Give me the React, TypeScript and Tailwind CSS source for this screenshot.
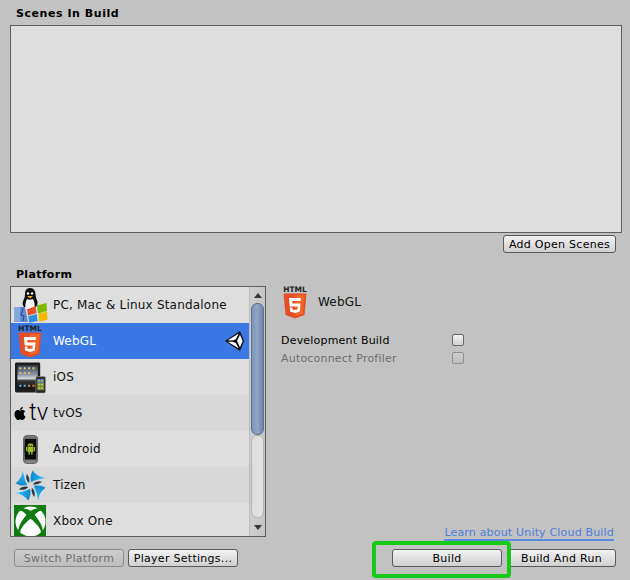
import React from 'react';
import { FaApple, FaXbox } from 'react-icons/fa6';

const Html5Icon = ({ className }: { className?: string }) => (
  <svg viewBox="0 0 24 33" className={className}>
    <text x="12" y="6" textAnchor="middle" fontSize="7.5" fontWeight="900" fontFamily="'DejaVu Sans', sans-serif" fill="#222">HTML</text>
    <path d="M0.500 7.500h23l-2 21.500-9.500 3.500L2.500 29z" fill="#e44d26" />
    <path d="M12 9h9.700l-1.800 18.800-7.900 2.700z" fill="#f16529" />
    <path d="M6 12h12l-.3 3H9.300l.2 2.600h8l-.7 8L12 27l-4.900-1.400-.3-4h2.600l.2 1.800 2.400.6 2.500-.6.3-3H6.700z" fill="#fff" />
  </svg>
);

const DesktopIcon = () => (
  <svg viewBox="0 0 36 36" className="w-[36px] h-[36px]">
    <path d="M2 20h11l3 15H3a1 1 0 0 1-1-1z" fill="#5f8bd3" />
    <path d="M2 20h6v15H3a1 1 0 0 1-1-1z" fill="#86a8de" />
    <path d="M11 21l-2 7 3 1-1 5" stroke="#26497f" fill="none" />
    <path d="M18 1c4 0 5.500 3 5.500 6.500 0 3 1.500 4.500 2 7.500.4 2-.5 4-1.500 5H12c-1-1-1.800-3-1-5.500.7-2.500 2-4 2-7C13 4 14 1 18 1z" fill="#0d0d0d" />
    <path d="M15 12c2 1 4 1 6 0 1.500 3 2 6 1.500 10H13.500c-.5-4 0-7 1.500-10z" fill="#f3f3f3" />
    <circle cx="16" cy="6.500" r="1.200" fill="#fff" />
    <circle cx="20" cy="6.500" r="1.200" fill="#fff" />
    <path d="M15 9h6l-3 2.500z" fill="#efb021" />
    <path d="M15 22.500l8.500-3.500 1 7-8.500 2.500z" fill="#e5532b" />
    <path d="M25 18.500l9.500-2.500.5 8-9 2.500z" fill="#7fb800" />
    <path d="M16.200 29.300l8.500-2.300 1 7-8.300 1.800z" fill="#2e90e2" />
    <path d="M26.300 26.700l8.800-2 .4 8-8.200 2z" fill="#f7b900" />
  </svg>
);

const TabletIcon = () => (
  <svg viewBox="0 0 32 33" className="w-[31px] h-[33px] ml-[1px]">
    <defs>
      <linearGradient id="ipad" x1="0" y1="0" x2="0" y2="1">
        <stop offset="0" stopColor="#3a4658" />
        <stop offset="0.4" stopColor="#8e9aa8" />
        <stop offset="0.55" stopColor="#d5d8dc" />
        <stop offset="0.65" stopColor="#333" />
        <stop offset="1" stopColor="#151515" />
      </linearGradient>
    </defs>
    <rect x="0" y="1" width="26" height="31" rx="1.500" fill="#1d1d1d" />
    <rect x="2.500" y="4" width="21" height="24.500" fill="url(#ipad)" />
    <path d="M4.500 6h2v2h-2zM9 6h2v2H9zM13.500 6h2v2h-2zM18 6h2v2h-2zM4.500 11h2v2h-2zM9 11h2v2H9zM13.500 11h2v2h-2z" fill="#e6c77a" />
    <path d="M4.500 24h2v2h-2zM9 24h2v2H9z" fill="#5fb0e8" />
    <path d="M13.500 24h2v2h-2zM18 24h2v2h-2z" fill="#e58a3c" />
    <rect x="21.500" y="15.500" width="10" height="17" rx="1.500" fill="#2a2a2a" stroke="#9a9a9a" strokeWidth="0.600" />
    <rect x="23" y="18" width="7" height="11.500" fill="#7a8f3d" />
    <path d="M23 18h7v4h-7z" fill="#4b78a8" />
    <path d="M24 19h1.500v1.500H24zM27 19h1.500v1.500H27zM24 23h1.500v1.500H24zM27 23h1.500v1.500H27zM24 26.500h1.500V28H24zM27 26.500h1.500V28H27z" fill="#e8d35a" />
  </svg>
);

const TvIcon = () => (
  <div className="w-[32px] flex items-center text-black">
    <FaApple className="w-[12px] h-[15px] shrink-0" />
    <span className="font-['Roboto',sans-serif] font-light text-[24px] leading-none ml-[3px] -mt-[3px]">tv</span>
  </div>
);

const PhoneIcon = () => (
  <svg viewBox="0 0 15 29" className="w-[15px] h-[29px]">
    <defs>
      <linearGradient id="phone" x1="0" y1="0" x2="0" y2="1">
        <stop offset="0" stopColor="#7b7b7b" />
        <stop offset="0.5" stopColor="#3a3a3a" />
        <stop offset="1" stopColor="#8c8c8c" />
      </linearGradient>
    </defs>
    <rect x="0.500" y="0.500" width="14" height="28" rx="3.500" fill="url(#phone)" stroke="#666" />
    <rect x="2" y="4" width="11" height="20.500" fill="#0c0c0c" />
    {/* android robot */}
    <path d="M4.500 11.500a3 3 0 0 1 6 0z" fill="#9ec02f" />
    <path d="M4.500 12h6v5h-1v2.500H8.200V17H6.800v2.500H5.500V17h-1z" fill="#9ec02f" />
    <path d="M3 12h1v4H3zM11 12h1v4h-1z" fill="#9ec02f" />
    <path d="M5.500 8l1 1.200M9.500 8l-1 1.200" stroke="#9ec02f" strokeWidth="0.500" />
    <path d="M6 10h.7v.7H6zM8.300 10H9v.7h-.7z" fill="#0c0c0c" />
  </svg>
);

const bladeAngles = [0, 90, 180, 270];

const TizenIcon = () => (
  <svg viewBox="0 0 36 36" className="w-[33px] h-[33px]">
    <defs>
      <linearGradient id="blade" x1="0" y1="0" x2="1" y2="0.300">
        <stop offset="0" stopColor="#0f7fc4" />
        <stop offset="1" stopColor="#27c1fb" />
      </linearGradient>
    </defs>
    {bladeAngles.map(a => (
      <g key={a} transform={`rotate(${a} 18 18)`}>
        <path d="M18.500 14.500C17.500 10 18 5.500 20.500 1.500 23 5.500 28 9 34.500 9.500 29 10.500 23 12 18.500 14.500z" fill="url(#blade)" />
        <path d="M16.500 15.500C13.500 13 12.500 9 14 5.500 16 8 17.500 11 16.500 15.500z" fill="#2a3a44" />
      </g>
    ))}
  </svg>
);

const UnityIcon = () => (
  <svg viewBox="0 0 19 20" className="w-[19px] h-[20px]">
    <path d="M0 10L15 0l4 10-4 10z" fill="#0a0a0a" />
    <path d="M2.800 9.300L13.800 2.600l-3 5.700-3.500 1.200z" fill="#fff" />
    <path d="M2.800 10.700l4.500.1 3.500 1.200 3 5.400z" fill="#fff" />
    <path d="M15 3.800l2.600 6.200-2.600 6.200-3-6.200z" fill="#fff" />
  </svg>
);

const ScrollBar = () => (
  <div className="w-[16px] h-full flex flex-col items-center bg-gradient-to-r from-[#cfcfcf] to-[#c4c4c4] border-l border-[#bdbdbd]">
    <div className="h-[16px] w-full flex items-center justify-center">
      <div className="w-0 h-0 border-x-[4px] border-x-transparent border-b-[5px] border-b-[#3a3a3a]" />
    </div>
    <div className="w-[13px] h-[132px] rounded-[6px] border border-[#5d7290] bg-gradient-to-r from-[#7f95b8] via-[#90a6c6] to-[#6f84a6]" />
    <div className="w-[13px] flex-1 rounded-[6px] border border-[#b3b3b3] bg-gradient-to-r from-[#dcdcdc] to-[#e4e4e4]" />
    <div className="h-[18px] w-full flex items-center justify-center">
      <div className="w-0 h-0 border-x-[4px] border-x-transparent border-t-[5px] border-t-[#3a3a3a]" />
    </div>
  </div>
);

const Btn = ({ label, className, disabled }: { label: string; className: string; disabled?: boolean }) => (
  <button
    className={`h-[18px] rounded-[3px] border flex items-center justify-center text-[11px] leading-none tracking-[0.28px] bg-gradient-to-b ${
      disabled ? 'border-[#8e8e8e] text-[#6f6f6f] from-[#cdcdcd] to-[#bcbcbc]' : 'border-[#5a5a5a] text-black from-[#f2f2f2] to-[#d0d0d0]'
    } ${className}`}
  >
    {label}
  </button>
);

const rows: { name: string; icon: React.ReactNode; bg: string; selected?: boolean }[] = [
  { name: 'PC, Mac & Linux Standalone', icon: <DesktopIcon />, bg: 'bg-[#dedede]' },
  { name: 'WebGL', icon: <Html5Icon className="w-[24px] h-[33px]" />, bg: 'bg-[#3a79e4]', selected: true },
  { name: 'iOS', icon: <TabletIcon />, bg: 'bg-[#dedede]' },
  { name: 'tvOS', icon: <TvIcon />, bg: 'bg-[#d8d8d8]' },
  { name: 'Android', icon: <PhoneIcon />, bg: 'bg-[#dedede]' },
  { name: 'Tizen', icon: <TizenIcon />, bg: 'bg-[#d8d8d8]' },
  {
    name: 'Xbox One',
    icon: (
      <div className="w-[32px] h-[32px] bg-[#107c10] flex items-center justify-center overflow-hidden">
        <FaXbox className="w-[31px] h-[31px] text-white" />
      </div>
    ),
    bg: 'bg-[#dedede]',
  },
];

export default function App() {
  return (
    <div className="relative w-[630px] h-[580px] overflow-hidden bg-[#c2c2c2] font-['DejaVu_Sans',sans-serif] text-[11px] text-black">
      <div className="h-[25px] pl-4 pt-[7px] font-bold leading-[14px] tracking-[0.55px]">Scenes In Build</div>
      <div className="ml-[10px] w-[612px] h-[208px] bg-[#dedede] border border-[#5e5e5e]" />
      <div className="flex justify-end pr-[14px] mt-[2px]">
        <Btn label="Add Open Scenes" className="w-[113px]" />
      </div>
      <div className="mt-[15px] pl-4 h-[13px] font-bold leading-[14px] tracking-[0.3px]">Platform</div>

      <div className="flex mt-[5px] h-[251px]">
        <div className="ml-[10px] w-[256px] h-full flex border border-[#5e5e5e] bg-[#dedede] overflow-hidden">
          <div className="flex-1 min-w-0">
            {rows.map(row => (
              <div key={row.name} className={`relative flex items-center h-[36px] ${row.bg} ${row.selected ? 'text-white' : 'text-[#111]'}`}>
                <div className="w-[38px] mr-[4px] flex justify-center shrink-0">{row.icon}</div>
                <span className="text-[12px] tracking-[0.2px] -mt-[1px]">{row.name}</span>
                {row.selected && (
                  <div className="absolute right-[5px] top-[8px]">
                    <UnityIcon />
                  </div>
                )}
              </div>
            ))}
          </div>
          <ScrollBar />
        </div>

        <div className="ml-[15px] w-[334px] flex flex-col">
          <div className="flex items-center pl-[2px]">
            <Html5Icon className="w-[24px] h-[33px]" />
            <span className="ml-[11px] -mt-[2px] text-[12px] tracking-[0.2px] text-[#111]">WebGL</span>
          </div>
          <div className="mt-[12px] pt-[2px] flex items-center h-[18px] tracking-[0.2px]">
            <span className="w-[171px]">Development Build</span>
            <div className="w-[12px] h-[12px] -mt-[2px] rounded-[2px] border border-[#666] bg-gradient-to-b from-[#f4f4f4] to-[#d2d2d2]" />
          </div>
          <div className="pt-[2px] flex items-center h-[18px] tracking-[0.2px] text-[#6f6f6f]">
            <span className="w-[171px]">Autoconnect Profiler</span>
            <div className="w-[12px] h-[12px] -mt-[2px] rounded-[2px] border border-[#909090] bg-gradient-to-b from-[#cecece] to-[#bebebe]" />
          </div>
          <div className="mt-auto -mb-[4px] flex justify-end pr-[1px]">
            <a className="h-[15px] leading-[14px] border-b-2 border-[#5b8ae0] text-[#4d7fdc] tracking-[0.18px]">Learn about Unity Cloud Build</a>
          </div>
        </div>
      </div>

      <div className="flex mt-[12px] pl-[14px]">
        <Btn label="Switch Platform" className="w-[110px]" disabled />
        <Btn label="Player Settings..." className="w-[110px] ml-[4px]" />
        <Btn label="Build" className="w-[110px] ml-[154px]" />
        <Btn label="Build And Run" className="w-[109px] ml-[5px]" />
      </div>

      <div className="absolute left-[372px] top-[541px] w-[139px] h-[37px] rounded-[4px] border-[4px] border-[#17c917]" />
    </div>
  );
}
